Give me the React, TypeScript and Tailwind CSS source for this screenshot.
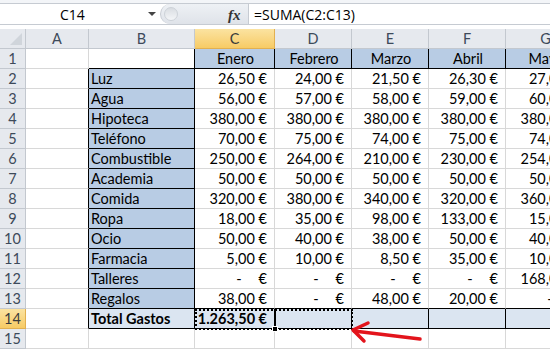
const COLS = [
  { key: 'A', w: 63 },
  { key: 'B', w: 106 },
  { key: 'C', w: 80 },
  { key: 'D', w: 77 },
  { key: 'E', w: 77 },
  { key: 'F', w: 77 },
  { key: 'G', w: 80 },
];

const MONTHS = ['Enero', 'Febrero', 'Marzo', 'Abril', 'Mayo'];

const ROWS: Array<[string, string[]]> = [
  ['Luz', ['26,50', '24,00', '21,50', '26,30', '27,00']],
  ['Agua', ['56,00', '57,00', '58,00', '59,00', '60,00']],
  ['Hipoteca', ['380,00', '380,00', '380,00', '380,00', '380,00']],
  ['Teléfono', ['70,00', '75,00', '74,00', '75,00', '74,00']],
  ['Combustible', ['250,00', '264,00', '210,00', '230,00', '254,00']],
  ['Academia', ['50,00', '50,00', '50,00', '50,00', '50,00']],
  ['Comida', ['320,00', '380,00', '340,00', '320,00', '360,00']],
  ['Ropa', ['18,00', '35,00', '98,00', '133,00', '15,00']],
  ['Ocio', ['50,00', '40,00', '38,00', '50,00', '40,00']],
  ['Farmacia', ['5,00', '10,00', '8,50', '35,00', '10,00']],
  ['Talleres', ['-', '-', '-', '-', '168,00']],
  ['Regalos', ['38,00', '-', '48,00', '20,00', '-']],
];

const font = { fontFamily: 'Lato, "Liberation Sans", sans-serif' };

function isBordered(r: number, c: number) {
  if (c === 1 && r >= 2 && r <= 14) return true;
  if (r === 1 && c >= 2) return true;
  if (r === 14 && c >= 2) return true;
  return false;
}

function fillFor(r: number, c: number) {
  if (r === 14 && c >= 1) return 'bg-[#dbe5f1]';
  if (c === 1 && r >= 2 && r <= 13) return 'bg-[#b8cce4]';
  if (r === 1 && c >= 2) return 'bg-[#b8cce4]';
  return 'bg-white';
}

function Money({ v, bold }: { v: string; bold?: boolean }) {
  if (v === '-') {
    return (
      <span className="flex">
        <span>-</span>
        <span className="ml-[17px]">€</span>
      </span>
    );
  }
  return <span className={bold ? 'font-bold' : ''}>{v} €</span>;
}

function cellContent(r: number, c: number) {
  if (r === 1 && c >= 2) return { node: MONTHS[c - 2], align: 'justify-center' };
  if (r >= 2 && r <= 13) {
    const [label, vals] = ROWS[r - 2];
    if (c === 1) return { node: label, align: 'justify-start' };
    if (c >= 2) return { node: <Money v={vals[c - 2]} />, align: 'justify-end' };
  }
  if (r === 14 && c === 1) return { node: <span className="font-bold">Total Gastos</span>, align: 'justify-start' };
  if (r === 14 && c === 2) return { node: <Money v="1.263,50" bold />, align: 'justify-end' };
  return { node: null, align: 'justify-start' };
}

function Cell({ r, c, w }: { r: number; c: number; w: number }) {
  const rb = isBordered(r, c) || isBordered(r, c + 1);
  const bb = isBordered(r, c) || isBordered(r + 1, c);
  const { node, align } = cellContent(r, c);
  return (
    <div
      className={`flex h-[20px] shrink-0 items-end border-r border-b pb-[1px] text-[14.5px] leading-[17px] text-black ${fillFor(r, c)} ${
        rb ? 'border-r-black' : 'border-r-[#d8d8d8]'
      } ${bb ? 'border-b-black' : 'border-b-[#d8d8d8]'} ${align} ${
        align === 'justify-end' ? 'pr-[7px]' : 'pl-[2px]'
      } overflow-visible whitespace-nowrap`}
      style={{ width: w }}
    >
      {node}
    </div>
  );
}

function FormulaBar() {
  return (
    <div className="h-[29px] bg-white">
      <div className="h-[4px] border-b border-[#c6cbd2] bg-[#f3f5f8]" />
      <div className="flex h-[21px] border-b border-[#c6cbd2] bg-white">
        <div className="relative flex w-[160px] items-center" style={{ fontFamily: '"Open Sans", sans-serif' }}>
          <span className="ml-[60px] text-[14px] text-black">C14</span>
          <span className="absolute left-[148px] top-[8px] h-0 w-0 border-x-[4px] border-t-[4px] border-x-transparent border-t-[#444]" />
        </div>
        <div className="relative flex w-[88px] items-center rounded-l-[10px] border-l border-[#c6cbd2] bg-gradient-to-b from-[#eef1f5] to-[#dfe3e9]">
          <span className="absolute left-[3px] top-[3px] h-[14px] w-[14px] rounded-full bg-gradient-to-b from-[#d9dde2] to-[#f4f6f8] border border-[#cdd2d8]" />
          <span
            className="absolute left-[67px] top-[0px] text-[15px] font-bold italic text-[#333]"
            style={{ fontFamily: '"Liberation Serif", serif' }}
          >
            fx
          </span>
        </div>
        <div className="flex flex-1 items-center border-l border-[#c6cbd2] pl-[5px]" style={{ fontFamily: '"Open Sans", sans-serif' }}>
          <span className="text-[14px] text-black">=SUMA(C2:C13)</span>
        </div>
      </div>
      <div className="h-[3px] bg-white" />
    </div>
  );
}

function HeaderRow() {
  return (
    <div className="flex h-[20px]">
      <div className="relative h-[20px] w-[26px] shrink-0 border-r border-b border-[#c3c8cf] bg-[#e6e9ee]">
        <svg className="absolute bottom-[3px] right-[3px]" width="12" height="12" viewBox="0 0 12 12">
          <polygon points="12,0 12,12 0,12" fill="#d0d5db" />
        </svg>
      </div>
      {COLS.map((col) => (
        <div
          key={col.key}
          className={`flex h-[20px] shrink-0 items-center justify-center border-r border-b text-[14.5px] ${
            col.key === 'C'
              ? 'border-[#e2b050] bg-gradient-to-b from-[#fbe3a0] to-[#f7cb64] text-[#3b3b3b]'
              : 'border-[#c3c8cf] bg-[#e6e9ee] text-[#3d4a5a]'
          }`}
          style={{ width: col.w }}
        >
          {col.key}
        </div>
      ))}
    </div>
  );
}

export default function App() {
  const rows = Array.from({ length: 15 }, (_, i) => i + 1);
  return (
    <div className="relative h-[350px] w-[550px] overflow-hidden bg-white" style={font}>
      <FormulaBar />
      <HeaderRow />
      {rows.map((r) => (
        <div key={r} className="flex h-[20px]">
          <div
            className={`flex h-[20px] w-[26px] shrink-0 items-center justify-center border-r border-b text-[14.5px] ${
              r === 14
                ? 'border-[#e2b050] bg-gradient-to-b from-[#fbe3a0] to-[#f7cb64] text-[#3b3b3b]'
                : 'border-[#c3c8cf] bg-[#e6e9ee] text-[#3d4a5a]'
            }`}
          >
            {r}
          </div>
          {COLS.map((col, c) => (
            <Cell key={col.key} r={r} c={c} w={col.w} />
          ))}
        </div>
      ))}

      {/* copy marquee + active cell on C14 */}
      <div className="absolute left-[195px] top-[309px] h-[21px] w-[158px] border-2 border-dotted border-black" />
      <div className="absolute left-[274px] top-[310px] h-[19px] w-[2px] bg-black" />
      <div className="absolute left-[272px] top-[326px] h-[6px] w-[6px] border border-white bg-black" />

      {/* red arrow */}
      <svg className="absolute left-[345px] top-[315px]" width="85" height="35" viewBox="0 0 85 35">
        <path d="M9 16 L75 24" stroke="#e3141c" strokeWidth="3.5" strokeLinecap="round" fill="none" />
        <path d="M23 8 L8 15 L19 26" stroke="#e3141c" strokeWidth="3.5" strokeLinecap="round" strokeLinejoin="round" fill="none" />
      </svg>
    </div>
  );
}
